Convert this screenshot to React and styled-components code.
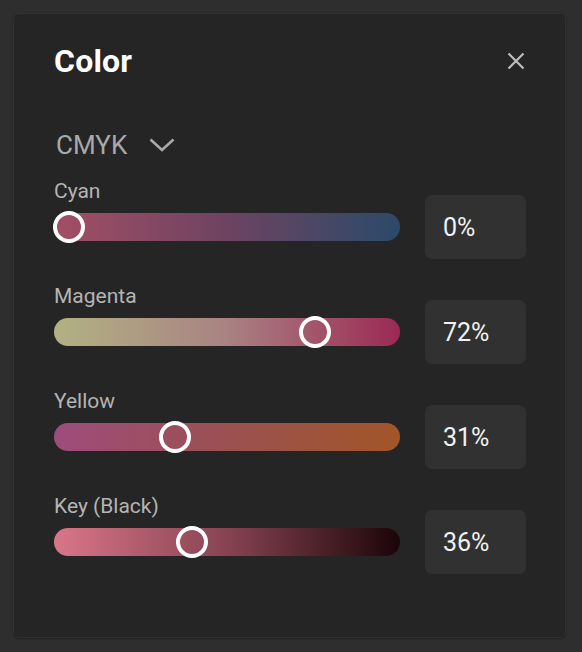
import React from "react";
import styled, { createGlobalStyle } from "styled-components";

const GlobalStyle = createGlobalStyle`
  html, body {
    margin: 0;
    background: #2e2e2e;
    font-family: Roboto, "Liberation Sans", sans-serif;
  }
`;

const Page = styled.div`
  padding: 13px 16px 14px 13px;
`;

const Panel = styled.section`
  background: #252525;
  border: 1px solid #313131;
  border-radius: 6px;
  padding: 28px 39px 81px 40px;
  box-shadow: 0 1px 2px rgba(0, 0, 0, 0.35);
`;

const Header = styled.header`
  display: flex;
  align-items: center;
  justify-content: space-between;
`;

const Title = styled.h1`
  margin: 0;
  font-size: 32px;
  line-height: 38px;
  font-weight: 700;
  letter-spacing: 0.2px;
  color: #ffffff;
`;

const CloseButton = styled.button`
  display: flex;
  padding: 0;
  margin-right: 1px;
  border: 0;
  background: none;
  color: #bdbdbd;
  cursor: pointer;
`;

const ModeSelect = styled.div`
  display: flex;
  align-items: center;
  gap: 22px;
  margin: 50px 0 19px 2px;
  font-size: 26px;
  line-height: 30px;
  color: #a9a9a9;
`;

const Rows = styled.div`
  display: flex;
  flex-direction: column;
  gap: 43px;
`;

const Row = styled.div`
  display: grid;
  grid-template-columns: 1fr 101px;
  grid-template-rows: auto 28px;
  column-gap: 25px;
  row-gap: 10px;
`;

const Label = styled.div`
  grid-column: 1;
  font-size: 21px;
  line-height: 24px;
  color: #b4b4b4;
`;

const Track = styled.div`
  grid-column: 1;
  grid-row: 2;
  position: relative;
  height: 28px;
  border-radius: 14px;
  background: linear-gradient(90deg, ${(p) => p.$from}, ${(p) => p.$mid}, ${(p) => p.$to});
`;

const Thumb = styled.span`
  position: absolute;
  top: -2px;
  width: 32px;
  height: 32px;
  box-sizing: border-box;
  border: 4px solid #ffffff;
  border-radius: 50%;
`;

const ValueBox = styled.div`
  grid-column: 2;
  grid-row: 2;
  display: flex;
  align-items: center;
  height: 64px;
  margin: -18px 0;
  padding-left: 18px;
  box-sizing: border-box;
  border-radius: 7px;
  background: #313131;
  font-size: 25px;
  color: #f2f2f2;
`;

const channels = [
  { name: "Cyan", value: 0, from: "#a34f65", mid: "#6d4361", to: "#2b4a69" },
  { name: "Magenta", value: 72, from: "#b2b283", mid: "#a98282", to: "#9b2954" },
  { name: "Yellow", value: 31, from: "#9e4c7b", mid: "#9a5151", to: "#a25527" },
  { name: "Key (Black)", value: 36, from: "#d97689", mid: "#874352", to: "#1b0508" },
];

const CloseIcon = () => (
  <svg width="18" height="18" viewBox="0 0 18 18" fill="none">
    <path d="M1.5 1.5L16.5 16.5M16.5 1.5L1.5 16.5" stroke="currentColor" strokeWidth="2.2" />
  </svg>
);

const Chevron = () => (
  <svg width="26" height="14" viewBox="0 0 26 14" fill="none">
    <path d="M1.5 1.5L13 12L24.5 1.5" stroke="#a9a9a9" strokeWidth="2.6" />
  </svg>
);

export default function App() {
  return (
    <Page>
      <GlobalStyle />
      <Panel>
        <Header>
          <Title>Color</Title>
          <CloseButton aria-label="Close">
            <CloseIcon />
          </CloseButton>
        </Header>
        <ModeSelect>
          CMYK
          <Chevron />
        </ModeSelect>
        <Rows>
          {channels.map((c) => (
            <Row key={c.name}>
              <Label>{c.name}</Label>
              <Track $from={c.from} $mid={c.mid} $to={c.to}>
                <Thumb style={{ left: `${(c.value / 100) * 342 - 1}px` }} />
              </Track>
              <ValueBox>{c.value}%</ValueBox>
            </Row>
          ))}
        </Rows>
      </Panel>
    </Page>
  );
}
